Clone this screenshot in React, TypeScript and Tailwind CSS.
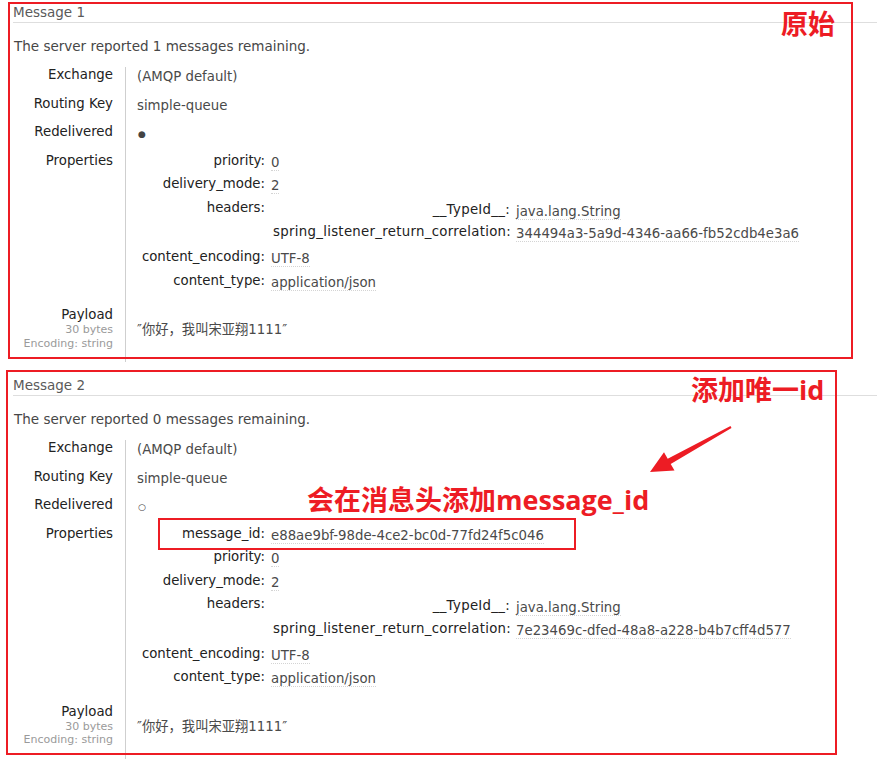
import React from "react";

type Prop = { key: string; value: string | { key: string; value: string }[] };

const messages = [
  {
    n: 1,
    remaining: 1,
    redelivered: true,
    props: [
      { key: "priority", value: "0" },
      { key: "delivery_mode", value: "2" },
      {
        key: "headers",
        value: [
          { key: "__TypeId__", value: "java.lang.String" },
          { key: "spring_listener_return_correlation", value: "344494a3-5a9d-4346-aa66-fb52cdb4e3a6" },
        ],
      },
      { key: "content_encoding", value: "UTF-8" },
      { key: "content_type", value: "application/json" },
    ] as Prop[],
  },
  {
    n: 2,
    remaining: 0,
    redelivered: false,
    props: [
      { key: "message_id", value: "e88ae9bf-98de-4ce2-bc0d-77fd24f5c046" },
      { key: "priority", value: "0" },
      { key: "delivery_mode", value: "2" },
      {
        key: "headers",
        value: [
          { key: "__TypeId__", value: "java.lang.String" },
          { key: "spring_listener_return_correlation", value: "7e23469c-dfed-48a8-a228-b4b7cff4d577" },
        ],
      },
      { key: "content_encoding", value: "UTF-8" },
      { key: "content_type", value: "application/json" },
    ] as Prop[],
  },
];

function Val({ children }: { children: React.ReactNode }) {
  return <span className="border-b border-dotted border-[#d4d4d4] text-[#4a4a4a]">{children}</span>;
}

function Headers({ rows }: { rows: { key: string; value: string }[] }) {
  return (
    <div className="grid grid-cols-[237px_auto] gap-x-[6px] ml-[2px] pt-[2px] pb-[2.5px]">
      {rows.map((r) => (
        <React.Fragment key={r.key}>
          <div className="text-right leading-4 pb-[6.5px] text-[#222] whitespace-nowrap tracking-[0.3px]">{r.key}:</div>
          <div className="leading-4 pt-[2px] pb-[4.5px] whitespace-nowrap">
            <Val>{r.value}</Val>
          </div>
        </React.Fragment>
      ))}
    </div>
  );
}

function Properties({ props }: { props: Prop[] }) {
  return (
    <div className="grid grid-cols-[128px_auto] gap-x-[6px]">
      {props.map((p) => (
        <React.Fragment key={p.key}>
          <div className="text-right leading-4 pb-[7.5px] text-[#222] whitespace-nowrap">{p.key}:</div>
          {typeof p.value === "string" ? (
            <div className="leading-4 pt-[2px] pb-[5.5px] whitespace-nowrap">
              <Val>{p.value}</Val>
            </div>
          ) : (
            <Headers rows={p.value} />
          )}
        </React.Fragment>
      ))}
    </div>
  );
}

function Message({ m }: { m: (typeof messages)[number] }) {
  return (
    <section className="mb-[11px]">
      <h2 className="ml-[13px] pt-[4px] pb-[2px] border-b border-[#dedede] text-[13.5px] leading-4 text-[#5a5a5a]">
        Message {m.n}
      </h2>
      <p className="ml-[14px] mt-[15px] text-[13.5px] leading-4 text-[#474747]">
        The server reported {m.remaining} messages remaining.
      </p>
      <div className="grid grid-cols-[100px_1fr] gap-x-3 ml-[13px] mt-[13px] text-[13.3px]">
        <div className="text-right leading-4 pb-[12.5px] text-[#222]">Exchange</div>
        <div className="border-l border-[#cfcfcf] pl-[11px] leading-4 pt-[2px] pb-[10.5px] text-[#4a4a4a]">
          (AMQP default)
        </div>
        <div className="text-right leading-4 pb-[12.5px] text-[#222]">Routing Key</div>
        <div className="border-l border-[#cfcfcf] pl-[11px] leading-4 pt-[2px] pb-[10.5px] text-[#4a4a4a]">
          simple-queue
        </div>
        <div className="text-right leading-4 pb-[12.5px] text-[#222]">Redelivered</div>
        <div className="border-l border-[#cfcfcf] pl-[12px] leading-4 pt-[2px] pb-[10.5px] text-[9px] text-[#444]">
          {m.redelivered ? "●" : "○"}
        </div>
        <div className="text-right leading-4 pb-[11px] text-[#222]">Properties</div>
        <div className="border-l border-[#cfcfcf] pl-[11px] pb-[11px]">
          <Properties props={m.props} />
        </div>
        <div className="text-right pb-[12px]">
          <div className="leading-4 text-[#222]">Payload</div>
          <div className="text-[11px] leading-[13.5px] text-[#9a9a9a]">30 bytes</div>
          <div className="text-[11px] leading-[13.5px] text-[#9a9a9a]">Encoding: string</div>
        </div>
        <div className="border-l border-[#cfcfcf] pl-[11px] pt-[15px] leading-4 text-[#4a4a4a]">
          ″你好，我叫宋亚翔1111″
        </div>
      </div>
    </section>
  );
}

export default function App() {
  return (
    <div className="relative w-[877px] h-[767px] overflow-hidden bg-white font-['DejaVu_Sans','Noto_Sans_CJK_SC',sans-serif]">
      {messages.map((m) => (
        <Message key={m.n} m={m} />
      ))}

      {/* annotations drawn on top of the screenshot */}
      <div className="absolute left-[8px] top-[2px] w-[845px] h-[357px] border-2 border-[#ed1c24]" />
      <div className="absolute left-[6px] top-[370px] w-[831px] h-[385px] border-2 border-[#ed1c24]" />
      <div className="absolute left-[158px] top-[518px] w-[418px] h-[32px] border-2 border-[#ed1c24]" />

      <div className="absolute left-[781px] top-[10px] text-[27px] leading-none font-bold text-[#ed1c24] font-['Open_Sans','Noto_Sans_CJK_SC',sans-serif]">
        原始
      </div>
      <div className="absolute left-[691px] top-[376px] text-[27px] leading-none font-bold text-[#ed1c24] font-['Open_Sans','Noto_Sans_CJK_SC',sans-serif]">
        添加唯一id
      </div>
      <div className="absolute left-[307px] top-[486px] text-[27px] leading-none font-bold text-[#ed1c24] font-['Open_Sans','Noto_Sans_CJK_SC',sans-serif]">
        会在消息头添加message_id
      </div>

      <svg className="absolute left-[640px] top-[420px]" width="100" height="60" viewBox="640 420 100 60">
        <polygon
          points="731.5,428 670.7,463.9 674.5,470.5 650,472 664,452.2 667.7,458.7 730.5,426"
          fill="#ed1c24"
        />
      </svg>
    </div>
  );
}
